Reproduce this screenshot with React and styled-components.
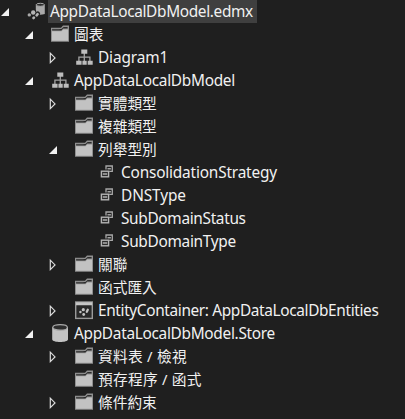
import React from "react";
import styled, { createGlobalStyle } from "styled-components";

const GlobalStyle = createGlobalStyle`
  html, body { margin: 0; background: #1f1f1f; }
  body { overflow: hidden; }
`;

const Tree = styled.div`
  width: 405px;
  height: 419px;
  background: #1f1f1f;
  color: #f1f1f1;
  font-family: "Noto Sans", "Noto Sans CJK TC", sans-serif;
`;

const indents = [0, 24, 48, 71];

const Row = styled.div`
  display: flex;
  height: 23px;
  padding-left: ${(p) => indents[p.$level]}px;
`;

const Glyph = styled.svg`
  flex: none;
  width: 24px;
  height: 23px;
`;

const Label = styled.span`
  height: 23px;
  line-height: 23px;
  padding: 0 4px 0 2px;
  white-space: pre;
  font-size: ${(p) => (p.$cjk ? 14.7 : 15.4)}px;
  letter-spacing: ${(p) => p.$tracking || 0}px;
  background: ${(p) => (p.$selected ? "#3f3f3f" : "transparent")};
`;

const G = "#c3c3c3";

function Expander({ state }) {
  return (
    <Glyph viewBox="0 0 24 23">
      {state === "open" && <path d="M9 8v8H1z" fill="#f1f1f1" />}
      {state === "closed" && (
        <path d="M2.3 7.2v9.4L7 11.9z" fill="none" stroke="#dcdcdc" strokeWidth="1.2" />
      )}
    </Glyph>
  );
}

const drawings = {
  model: (
    <>
      <path d="M11.8 4.8v9.2q4.5 1.6 9 0V4.8z" fill="#a9a9a9" />
      <ellipse cx="16.3" cy="4.8" rx="4.1" ry="1.5" fill="#2b2b2b" stroke="#a9a9a9" />
      <path d="M13.8 13.8 11.2 16.6" stroke="#1f1f1f" strokeWidth="4.6" strokeLinecap="round" />
      <circle cx="9.2" cy="12.5" r="3.2" fill="#1f1f1f" />
      <circle cx="5.3" cy="14.9" r="1.7" fill="#a9a9a9" />
      <circle cx="9.2" cy="12.5" r="2.2" fill="#b4b4b4" />
      <path d="M13.6 14.2 12.6 15.3M9.9 17.6l-.4.4" stroke="#b4b4b4" strokeWidth="2.6" strokeLinecap="round" />
    </>
  ),
  folder: (
    <>
      <path d="M3 18.7V4.7h10L15 2.4h6v16.3z" fill="#909090" />
      <path d="M4 17.8V8.2h9.5l1.6-1.8H20v11.4z" fill="#c2c2c2" />
      <path d="M4.2 6h9.2l2.2-2h4v1.6h-4.4l-1.9 1.9H4.2z" fill="#2c2c2c" />
      <path d="M4.4 6.3h7.2" stroke="#666" strokeWidth=".5" />
    </>
  ),
  diagram: (
    <>
      <path d="M12.3 7v8M6.9 15v-3.8h11V15" fill="none" stroke="#a2a2a2" strokeWidth="1.3" />
      <path d="M9.3 3.6h6v4.2h-6zM4.2 14.8h5.4v4H4.2zM10.4 14.8h4.3v4h-4.3zM15.7 14.8h5v4h-5z" fill="#bdbdbd" />
    </>
  ),
  enumType: (
    <>
      <path d="M11 8.6V5h6.3v5.3h-3.1" fill="none" stroke="#a8a8a8" strokeWidth="1.3" />
      <path d="M12.5 7.8h3.4" stroke={G} strokeWidth="1.2" />
      <rect x="6.4" y="10.2" width="7.2" height="5.6" fill="#2b2b2b" stroke="#b4b4b4" strokeWidth="1.4" />
      <path d="M7.8 13h4.4" stroke={G} strokeWidth="1.3" />
    </>
  ),
  container: (
    <>
      <path d="M3 2.3h18v17.8H3z" fill="#9a9a9a" />
      <path d="M4 3.3h16v3H4z" fill="#c6c6c6" />
      <path d="M4.4 6.3h15.2v12.4H4.4z" fill="#292929" />
      <circle cx="8.4" cy="13" r="1.2" fill={G} />
      <circle cx="11.3" cy="10.7" r="1.6" fill={G} />
      <circle cx="11.7" cy="15.5" r="1.4" fill={G} />
      <path d="M15.8 10.7 14.8 12.7" stroke={G} strokeWidth="2.3" strokeLinecap="round" />
    </>
  ),
  store: (
    <>
      <path d="M4.2 5.3v11.9c0 3.7 15.8 3.7 15.8 0V5.3z" fill={G} />
      <ellipse cx="12.1" cy="5.4" rx="7.3" ry="2.8" fill="#2d2d2d" stroke="#aaa" strokeWidth="1.2" />
    </>
  ),
};

const rows = [
  [0, "open", "model", "AppDataLocalDbModel.edmx", -0.34],
  [1, "open", "folder", "圖表"],
  [2, "closed", "diagram", "Diagram1", -0.12],
  [1, "open", "diagram", "AppDataLocalDbModel", -0.28],
  [2, "closed", "folder", "實體類型"],
  [2, "", "folder", "複雜類型"],
  [2, "open", "folder", "列舉型別"],
  [3, "", "enumType", "ConsolidationStrategy", -0.19],
  [3, "", "enumType", "DNSType", -0.1],
  [3, "", "enumType", "SubDomainStatus", -0.33],
  [3, "", "enumType", "SubDomainType", -0.3],
  [2, "closed", "folder", "關聯"],
  [2, "", "folder", "函式匯入"],
  [2, "closed", "container", "EntityContainer: AppDataLocalDbEntities", -0.36],
  [1, "open", "store", "AppDataLocalDbModel.Store", -0.3],
  [2, "closed", "folder", "資料表 / 檢視", 0.3],
  [2, "", "folder", "預存程序 / 函式", 0.28],
  [2, "closed", "folder", "條件約束"],
];

export default function App() {
  return (
    <Tree>
      <GlobalStyle />
      {rows.map(([level, state, icon, text, tracking], i) => (
        <Row key={i} $level={level}>
          <Expander state={state} />
          <Glyph viewBox="0 0 24 23">{drawings[icon]}</Glyph>
          <Label $cjk={/[\u4e00-\u9fff]/.test(text)} $selected={i === 0} $tracking={tracking}>
            {text}
          </Label>
        </Row>
      ))}
    </Tree>
  );
}
